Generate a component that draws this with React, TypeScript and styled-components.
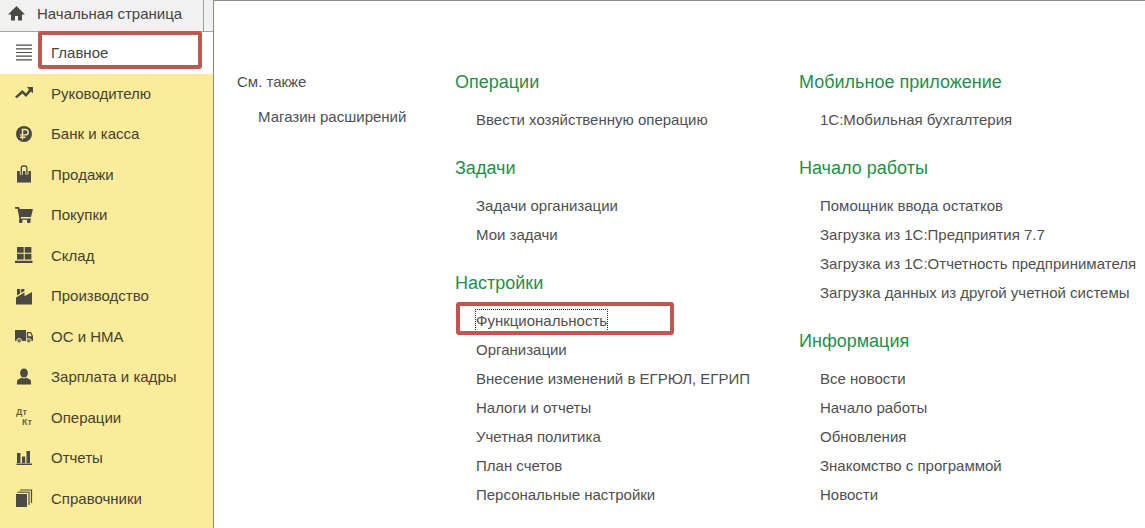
import React from "react";
import styled, { createGlobalStyle, css } from "styled-components";

const GlobalStyle = createGlobalStyle`
  *, *::before, *::after { box-sizing: border-box; }
  html, body, #root { height: 100%; }
  body {
    margin: 0;
    background: #fff;
    font-family: "Liberation Sans", Arial, sans-serif;
    font-size: 15px;
    color: #4a4a4a;
  }
`;

const Page = styled.div`
  display: flex;
  min-height: 100%;
  overflow: hidden;
`;

const Sidebar = styled.aside`
  flex: 0 0 214px;
  display: flex;
  flex-direction: column;
  background: #fbec9c;
  border-right: 1px solid #8c8a74;
`;

const TabBar = styled.div`
  display: flex;
  height: 32px;
  background: #f1f1f1;
  border-bottom: 1px solid #a5a5a5;
`;

const HomeTab = styled.button`
  display: flex;
  align-items: center;
  gap: 10px;
  width: 204px;
  padding: 0 0 5px 7px;
  border: 0;
  border-right: 1px solid #a0a0a0;
  background: none;
  font: inherit;
  color: #444;
  white-space: nowrap;
`;

const Sections = styled.nav`
  flex: 1;
`;

const SectionLink = styled.a<{ $active?: boolean }>`
  position: relative;
  display: flex;
  align-items: center;
  gap: 17px;
  height: 40px;
  padding: 0 0 2px 14px;
  color: #45412f;
  text-decoration: none;
  white-space: nowrap;

  &:nth-child(odd) { height: 41px; }

  ${(p) => p.$active && css`
    && { height: 42px; }
    background: #fff;
    color: #444;
  `}
`;

const Icon = styled.svg`
  flex: none;
  width: 20px;
  height: 20px;
  fill: #4b4a42;
`;

const Marker = styled.span<{ $wide?: boolean }>`
  position: absolute;
  border: 4px solid #c0564f;
  border-radius: 3px;
  pointer-events: none;
  ${(p) => p.$wide
    ? css`top: -4px; left: 1px; width: 218px; height: 33px;`
    : css`top: -1px; left: 38px; width: 164px; height: 38px;`}
`;

const Content = styled.main`
  flex: 1;
  min-width: 0;
  display: grid;
  grid-template-columns: minmax(0, 218fr) minmax(0, 344fr) minmax(0, 346fr);
  align-content: start;
  padding: 69px 0 0 23px;
  border-top: 1px solid #8c8c8c;
`;

const Column = styled.div`
  display: flex;
  flex-direction: column;
  gap: 22px;
`;

const Heading = styled.h2<{ $plain?: boolean }>`
  margin: 0 0 11px;
  font-size: 18px;
  line-height: 24px;
  font-weight: 400;
  color: #1f8f49;
  white-space: nowrap;
  ${(p) => p.$plain && css`
    margin-bottom: 8px;
    font-size: 15px;
    color: #4f4f4f;
  `}
`;

const Links = styled.ul`
  margin: 0;
  padding: 0;
  list-style: none;
`;

const Item = styled.li`
  position: relative;
  display: flex;
  align-items: center;
  height: 29px;
  padding-left: 20px;
`;

const CommandLink = styled.a<{ $focused?: boolean }>`
  border: 1px dotted ${(p) => (p.$focused ? "#222" : "transparent")};
  line-height: 21px;
  color: #4f4f4f;
  text-decoration: none;
  white-space: nowrap;
`;

const icons: Record<string, React.ReactNode> = {
  menu: <path d="M2 2.500h16v1.200H2zM2 6.200h16v1.200H2zM2 9.900h16v1.200H2zM2 13.600h16v1.200H2zM2 17.300h16v1.200H2z" />,
  trend: <path d="M13 4h6v6.500l-2-2-5 5.500-3.600-3.600-5.600 4.800L1 13.800 8.300 7l3.800 3.600 2.900-4z" />,
  ruble: (
    <>
      <circle cx="10" cy="10" r="8" />
      <path d="M8.500 15.500V5.500h3a2.700 2.700 0 0 1 0 5.400H6M6 13.200h5.500" fill="none" stroke="#fbec9c" strokeWidth="1.400" />
    </>
  ),
  bag: (
    <>
      <path d="M3 7h14v11.500H3z" />
      <path d="M7.300 10.500V4q0-2 2-2h1.600q2 0 2 2v6.500" fill="none" stroke="#fbec9c" strokeWidth="3.200" />
      <path d="M7.300 10V4q0-2 2-2h1.600q2 0 2 2v6" fill="none" stroke="#4b4a42" strokeWidth="1.300" />
    </>
  ),
  cart: (
    <>
      <path d="M1 2h4l.8 2H19l-2 8H6.800l.4 1.500H17v1.300H5.600L3.500 3.800H1z" />
      <rect x="5" y="14" width="3.500" height="4" rx="1" />
      <rect x="13" y="14" width="3.500" height="4" rx="1" />
    </>
  ),
  store: <path d="M3 2h6.700v5.800H3zM10.700 2h6.700v5.800h-6.700zM3 8.800h6.700v5.700H3zM10.700 8.800h6.700v5.700h-6.700zM1 15.800h17.500V18H1z" />,
  factory: <path d="M2 18.500v-7L10.500 6.500v3.800L18 6v12.500zM3 3h3.200v4.500L3 9.500zM7.200 3h3.200v2L7.200 6.900z" />,
  truck: (
    <>
      <path d="M1 4h11v11H1zM12.800 6H17l2 4v5h-6.200z" />
      <path d="M14.200 7.200h2.200l1.300 3h-3.500z" fill="#fbec9c" />
      <circle cx="5.200" cy="14.800" r="2.300" fill="#77715a" stroke="#fbec9c" />
      <circle cx="14.800" cy="14.800" r="2.300" fill="#77715a" stroke="#fbec9c" />
    </>
  ),
  person: (
    <>
      <ellipse cx="10" cy="6" rx="3.900" ry="4.500" />
      <path d="M3 17.500v-3q0-2 2.500-2.700L8 10.800q2 1.200 4 0l2.500 1Q17 12.500 17 14.500v3z" />
    </>
  ),
  entries: (
    <g fontSize="9" fontWeight="700" fill="#67624a">
      <text x="2" y="8">Дт</text>
      <text x="8" y="18">Кт</text>
    </g>
  ),
  chart: <path d="M3 5h3.500v10H3zM8 8.500h3.200V15H8zM12.500 3H16v12h-3.500zM2.500 15.500h15.500v1.500H2.500z" />,
  books: (
    <>
      <path d="M2 6h11v13H2z" />
      <path d="M3.500 4.300H15V17" fill="none" stroke="#77715a" strokeWidth="1.600" />
      <path d="M6 2h11.500v13" fill="none" stroke="#4b4a42" strokeWidth="1.200" />
    </>
  ),
};

const sections = [
  ["Руководителю", "trend"],
  ["Банк и касса", "ruble"],
  ["Продажи", "bag"],
  ["Покупки", "cart"],
  ["Склад", "store"],
  ["Производство", "factory"],
  ["ОС и НМА", "truck"],
  ["Зарплата и кадры", "person"],
  ["Операции", "entries"],
  ["Отчеты", "chart"],
  ["Справочники", "books"],
];

type Group = { title: string; plain?: boolean; links: string[] };

const columns: Group[][] = [
  [{ title: "См. также", plain: true, links: ["Магазин расширений"] }],
  [
    { title: "Операции", links: ["Ввести хозяйственную операцию"] },
    { title: "Задачи", links: ["Задачи организации", "Мои задачи"] },
    {
      title: "Настройки",
      links: [
        "Функциональность",
        "Организации",
        "Внесение изменений в ЕГРЮЛ, ЕГРИП",
        "Налоги и отчеты",
        "Учетная политика",
        "План счетов",
        "Персональные настройки",
      ],
    },
  ],
  [
    { title: "Мобильное приложение", links: ["1С:Мобильная бухгалтерия"] },
    {
      title: "Начало работы",
      links: [
        "Помощник ввода остатков",
        "Загрузка из 1С:Предприятия 7.7",
        "Загрузка из 1С:Отчетность предпринимателя",
        "Загрузка данных из другой учетной системы",
      ],
    },
    {
      title: "Информация",
      links: ["Все новости", "Начало работы", "Обновления", "Знакомство с программой", "Новости"],
    },
  ],
];

const selected = "Функциональность";

export default function App() {
  return (
    <>
      <GlobalStyle />
      <Page>
        <Sidebar>
          <TabBar>
            <HomeTab type="button">
              <Icon viewBox="0 0 20 20" aria-hidden="true">
                <path d="M9.500 3 18 11.500H15V17.500h-4V13H8v4.500H4v-6H1z" />
              </Icon>
              Начальная страница
            </HomeTab>
          </TabBar>
          <Sections>
            <SectionLink href="#main" $active>
              <Icon viewBox="0 0 20 20" aria-hidden="true">{icons.menu}</Icon>
              Главное
              <Marker />
            </SectionLink>
            {sections.map(([label, icon]) => (
              <SectionLink href={`#${icon}`} key={icon}>
                <Icon viewBox="0 0 20 20" aria-hidden="true">{icons[icon]}</Icon>
                {label}
              </SectionLink>
            ))}
          </Sections>
        </Sidebar>
        <Content>
          {columns.map((groups, i) => (
            <Column key={i}>
              {groups.map((group) => (
                <section key={group.title}>
                  <Heading $plain={group.plain}>{group.title}</Heading>
                  <Links>
                    {group.links.map((link) => (
                      <Item key={link}>
                        <CommandLink href="#command" $focused={link === selected}>{link}</CommandLink>
                        {link === selected && <Marker $wide />}
                      </Item>
                    ))}
                  </Links>
                </section>
              ))}
            </Column>
          ))}
        </Content>
      </Page>
    </>
  );
}
